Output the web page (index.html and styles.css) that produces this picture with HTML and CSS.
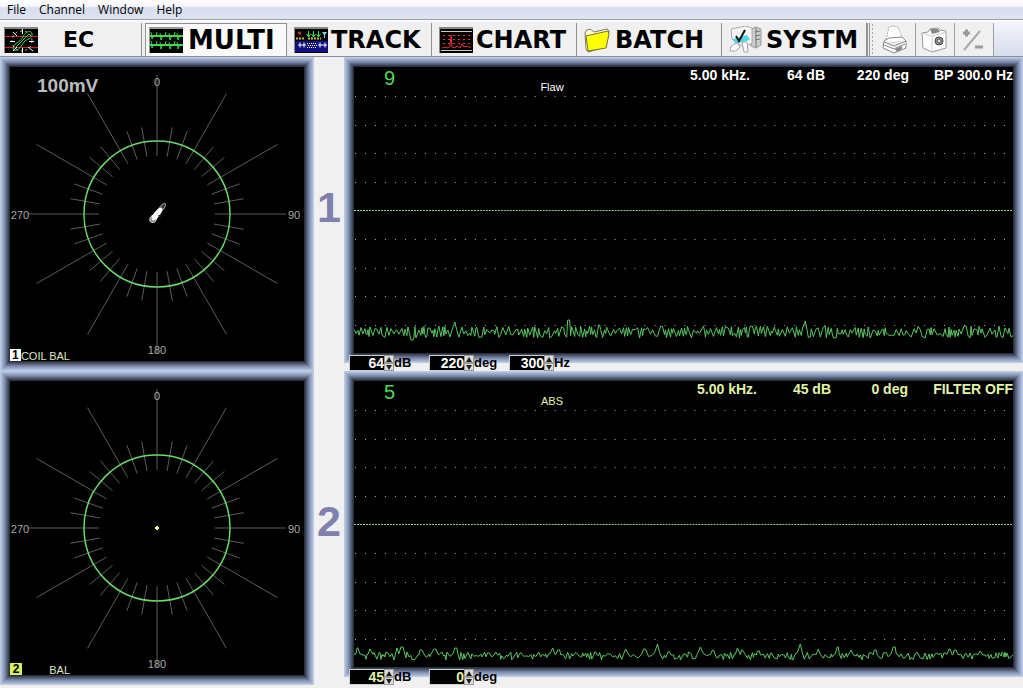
FILE: index.html
```html
<!DOCTYPE html>
<html lang="en">
<head>
    <meta charset="UTF-8">
    <meta name="viewport" content="width=device-width, initial-scale=1.0">
    <title>Eddy Current</title>
    <link rel="stylesheet" href="styles.css">
</head>
<body>
    <nav class="menu-bar">
        <button type="button">File</button>
        <button type="button">Channel</button>
        <button type="button">Window</button>
        <button type="button">Help</button>
    </nav>

    <div class="toolbar">
        <button type="button" class="mode mode-ec">
            <svg class="icon" viewBox="0 0 34 26">
                <rect width="34" height="26" fill="#888"/><rect x="1" y="2" width="33" height="24" fill="#000"/>
                <path d="M1 9.500H34M1 20.500H34" stroke="#d02020"/>
                <circle cx="18" cy="14" r="10" fill="none" stroke="#ddd" stroke-dasharray="2 3"/>
                <path d="M18.500 2v5M18.500 21v5M6 14.500h5M25 14.500h5M9 5l4 4M9 24l4-4M24 20l5 4" stroke="#fff"/>
                <path d="M10 23C6 18 17 15 19 10S27 2 28 7 22 12 20 15 14 25 10 23ZM12 20L25 7" fill="none" stroke="#40d850"/>
            </svg>
            <span>EC</span>
        </button>
        <button type="button" class="mode active">
            <svg class="icon" viewBox="0 0 34 26">
                <rect width="34" height="26" fill="#999"/><rect x="1" y="2" width="33" height="24" fill="#000"/>
                <path d="M1 9h33M1 18h33" stroke="#40d850" stroke-width="2"/>
                <path d="M2 5l1 7 2-4 2 2 1-5M11 6l1 7 2-5 2 2 1-5M20 6l1 7 2-5 2 2 1-5M28 6l1 7 2-5 2 2M2 14l1 7 2-4 2 2 1-5M11 15l1 7 2-5 2 2 1-5M20 15l1 7 2-5 2 2 1-5M28 15l1 7 2-5 2 2" fill="none" stroke="#40d850"/>
            </svg>
            <span>MULTI</span>
        </button>
        <button type="button" class="mode">
            <svg class="icon" viewBox="0 0 34 26">
                <rect width="34" height="26" fill="#888"/><rect x="1" y="2" width="33" height="24" fill="#000"/>
                <rect x="1" y="14" width="33" height="11" fill="#101080"/>
                <path d="M4 6h3M5.500 4.500v3" stroke="#d03030" stroke-width="2"/>
                <path d="M14.500 4v6M19.500 4v6M24.500 4v6M12.500 7l2 3 2-3M17.500 7l2 3 2-3M22.500 7l2 3 2-3" fill="none" stroke="#40d850"/>
                <path d="M28 5h5l-2 3v3h-1V8z" fill="#60e0e0"/>
                <path d="M2 11.500h8M14 11.500h13" stroke="#c8c030" stroke-width="2" stroke-dasharray="2 1"/>
                <path d="M4 18h8M6 15.500v5M10 15.500v5M24 18h9M26 15.500v5M31 15.500v5" stroke="#fff"/>
                <path d="M13 16.500h9M14 18.500h9M13 20.500h9" stroke="#fff" stroke-dasharray="1 1"/>
            </svg>
            <span>TRACK</span>
        </button>
        <button type="button" class="mode">
            <svg class="icon" viewBox="0 0 34 26">
                <rect width="34" height="26" fill="#888"/><rect x="1" y="2" width="33" height="24" fill="#000"/>
                <path d="M2 4.500H33M2 23.500H33" stroke="#ccc"/>
                <path d="M4 8.500H32M4 12.500H32M4 16.500H32" stroke="#d04040" stroke-dasharray="2 3"/>
                <path d="M3 21l3-1 3 1 2-2 1-11 1 12 3 1 2-2 3 2 2-4 2 3 3-1 4 2" fill="none" stroke="#f03030"/>
            </svg>
            <span>CHART</span>
        </button>
        <button type="button" class="mode">
            <svg class="icon icon-folder" viewBox="0 0 28 26">
                <path d="M2 22L1 6q1-4 5-4l4 3 13-3 2 2-3 16L4 25z" fill="#fffbd0" stroke="#777"/>
                <path d="M2 9l22-5 1 3-3 14-18 3z" fill="#ffff00" stroke="#777722"/>
            </svg>
            <span>BATCH</span>
        </button>
        <button type="button" class="mode">
            <svg class="icon icon-system" viewBox="0 0 34 28">
                <path d="M22 3l5-2 5 2v16l-5 3-5-2z" fill="#ccc" stroke="#999"/>
                <path d="M26 6l5-1M26 10l5-1M26 14l5-1M27 2v19" stroke="#777"/>
                <path d="M2 3l15-3 6 2v15l-7 4-9-4-4-4z" fill="#f4f4f4" stroke="#aaa"/>
                <path d="M4 13l14-4 3 5-15 4z" fill="#50d8e8"/>
                <path d="M2 20l6-3 3 4-4 4H1zM13 16h5l1 10h-4z" fill="#fff" stroke="#aaa"/>
                <path d="M7 10l3 5 6-11" fill="none" stroke="#111" stroke-width="2"/>
            </svg>
            <span>SYSTM</span>
        </button>
        <div class="tools">
            <button type="button" aria-label="Print">
                <svg viewBox="0 0 28 30">
                    <path d="M5 15L8 2l3-1 6 1 3 8 1 5-9 3z" fill="#fff" stroke="#aaa" stroke-dasharray="2 1"/>
                    <path d="M3 16l5-3 13-1 4 4v7l-12 5L2 23zM3 17l10 4 12-5M3 20l10 4 11-5" fill="#fff" stroke="#888"/>
                    <path d="M14 24l7-3v3l-5 3z" fill="#888"/>
                </svg>
            </button>
            <button type="button" aria-label="Capture">
                <svg viewBox="0 0 28 30">
                    <path d="M2 8l6-1 2-3 8-1 2 2 6 1v17l-14 4-9-4z" fill="#fff" stroke="#999"/>
                    <path d="M2 8l10 3 14-4M12 11v16" fill="none" stroke="#ccc"/>
                    <path d="M10 4h8l2 3-8 2z" fill="#888"/>
                    <circle cx="19" cy="16" r="4" fill="#999" stroke="#444"/>
                    <circle cx="19" cy="16" r="2" fill="#ddd" stroke="#555"/>
                </svg>
            </button>
            <button type="button" aria-label="Offset">
                <svg viewBox="0 0 28 30">
                    <path d="M4 8h7M7.500 4.500v7M16 22h8" stroke="#999" stroke-width="3"/>
                    <path d="M21 6L5 25" stroke="#aaa" stroke-width="2"/>
                </svg>
            </button>
        </div>
    </div>

    <main>
        <section class="channel">
            <div class="frame dial">
                <svg viewBox="0 0 294 294">
                    <g class="ticks"></g>
                    <circle class="ring" cx="147" cy="147" r="73"/>
                    <g transform="rotate(38 147 147)">
                        <ellipse cx="147" cy="139" rx="2" ry="5" fill="#333" stroke="#999"/>
                        <ellipse cx="147" cy="153" rx="3" ry="4" fill="#777" stroke="#ccc"/>
                        <ellipse cx="147" cy="147" rx="3" ry="8" fill="#fff"/>
                    </g>
                    <path d="M148 148h3v2h-2z" fill="#222"/>
                    <text x="147" y="19">0</text>
                    <text x="10" y="152">270</text>
                    <text x="284" y="152">90</text>
                    <text x="147" y="287">180</text>
                </svg>
                <span class="scale">100mV</span>
                <div class="balance"><b>1</b><span>COIL BAL</span></div>
            </div>
            <div class="number">1</div>
            <div class="strip">
                <div class="frame plot">
                    <svg viewBox="0 0 660 286" preserveAspectRatio="none" data-base="265" data-kind="flaw"></svg>
                    <span class="count">9</span>
                    <span class="name">Flaw</span>
                    <div class="readouts">
                        <span>5.00 kHz.</span><span>64 dB</span><span>220 deg</span><span>BP 300.0 Hz</span>
                    </div>
                </div>
                <form class="settings">
                    <div class="setting">
                        <input id="gain1" value="64">
                        <div class="spin"><button type="button" aria-label="Up"></button><button type="button" aria-label="Down"></button></div>
                        <label for="gain1">dB</label>
                    </div>
                    <div class="setting">
                        <input id="phase1" value="220">
                        <div class="spin"><button type="button" aria-label="Up"></button><button type="button" aria-label="Down"></button></div>
                        <label for="phase1">deg</label>
                    </div>
                    <div class="setting">
                        <input id="filter1" value="300">
                        <div class="spin"><button type="button" aria-label="Up"></button><button type="button" aria-label="Down"></button></div>
                        <label for="filter1">Hz</label>
                    </div>
                </form>
            </div>
        </section>

        <section class="channel second">
            <div class="frame dial">
                <svg viewBox="0 0 294 294">
                    <g class="ticks"></g>
                    <circle class="ring" cx="147" cy="147" r="73"/>
                    <path d="M145 147h4M147 145v4" stroke="#e8f890" stroke-width="2"/>
                    <text x="147" y="19">0</text>
                    <text x="10" y="152">270</text>
                    <text x="284" y="152">90</text>
                    <text x="147" y="287">180</text>
                </svg>
                <div class="balance"><b>2</b><span>BAL</span></div>
            </div>
            <div class="number">2</div>
            <div class="strip">
                <div class="frame plot">
                    <svg viewBox="0 0 660 286" preserveAspectRatio="none" data-base="276" data-kind="abs"></svg>
                    <span class="count">5</span>
                    <span class="name">ABS</span>
                    <div class="readouts">
                        <span>5.00 kHz.</span><span>45 dB</span><span>0 deg</span><span>FILTER OFF</span>
                    </div>
                </div>
                <form class="settings">
                    <div class="setting">
                        <input id="gain2" value="45">
                        <div class="spin"><button type="button" aria-label="Up"></button><button type="button" aria-label="Down"></button></div>
                        <label for="gain2">dB</label>
                    </div>
                    <div class="setting">
                        <input id="phase2" value="0">
                        <div class="spin"><button type="button" aria-label="Up"></button><button type="button" aria-label="Down"></button></div>
                        <label for="phase2">deg</label>
                    </div>
                </form>
            </div>
        </section>
    </main>
    <script src="app.js"></script>
</body>
</html>
```
FILE: styles.css
```css
* {
    margin: 0;
    padding: 0;
    box-sizing: border-box;
}

body {
    min-height: 100vh;
    background: #f0f0f0;
    font-family: "Liberation Sans", Arial, sans-serif;
}

button {
    border: none;
    background: none;
    color: #000;
}

svg {
    display: block;
}

/* Menu and toolbar */
.menu-bar {
    display: flex;
    gap: 13px;
    height: 20px;
    padding-left: 7px;
    background: linear-gradient(#fff 0, #f6f7fb 6px, #d9dfef 8px, #dde3f2 100%);
    border-bottom: 1px solid #a0a0a0;
}

.menu-bar button {
    font: 12px/19px "Open Sans", sans-serif;
}

.toolbar {
    display: flex;
    height: 37px;
    padding-top: 2px;
    border-top: 1px solid #fff;
    border-bottom: 1px solid #8890a0;
    background: linear-gradient(#f4f6fb, #d6ddee);
}

.mode {
    display: flex;
    align-items: center;
    gap: 3px;
    flex: none;
    width: 145px;
    padding-left: 7px;
    background: #f0f0f0;
    border-right: 1px solid #909090;
    font: bold 24px/30px "DejaVu Sans", Verdana, sans-serif;
}

.mode-ec {
    width: 142px;
    gap: 25px;
    padding-left: 4px;
    font-size: 22px;
}

.mode.active {
    width: 145px;
    background: #fafafa;
    border-left: 1px solid #909090;
    border-top: 1px solid #909090;
    box-shadow: -3px 0 0 #f0f0f0;
    margin-left: 3px;
    width: 142px;
    padding-left: 3px;
    gap: 5px;
    font-size: 26px;
}

.icon {
    width: 34px;
    height: 26px;
    flex: none;
}

.icon-folder {
    width: 28px;
}

.icon-system {
    height: 28px;
}

.tools {
    display: flex;
    background: #f0f0f0;
    border-left: 3px double #909090;
    padding-left: 7px;
    background-image: radial-gradient(circle, #aaa 1px, transparent 1px);
    background-size: 5px 4px;
    background-repeat: repeat-y;
}

.tools button {
    width: 39px;
    padding-left: 4px;
    border-right: 1px solid #a0a0a0;
}

.tools svg {
    width: 28px;
    height: 30px;
}

/* Channels */
.channel {
    display: grid;
    grid-template-columns: 314px 30px 1fr;
}

.frame {
    position: relative;
    margin: 10px;
    background: #000;
    box-shadow: 0 0 0 1px #2b303d, 0 0 0 2px #3a4253, 0 0 0 3px #4c566c,
        0 0 0 4px #5f6b86, 0 0 0 5px #717e9d, 0 0 0 6px #8290b1,
        0 0 0 7px #919fc0, 0 0 0 8px #9fadcc, 0 0 0 9px #aebcd8, 0 0 0 10px #bccbe4;
}

.number {
    display: grid;
    place-items: center;
    padding-bottom: 14px;
    color: #8080ae;
    font-size: 43px;
    font-weight: bold;
}

.strip {
    display: flex;
    flex-direction: column;
    min-width: 0;
}

/* Impedance dial */
.dial text {
    fill: #a8a8a8;
    font-size: 11px;
    text-anchor: middle;
}

.ticks {
    stroke: #5c5c5c;
}

.ring {
    fill: none;
    stroke: #6cd86c;
    stroke-width: 1.5;
}

.scale {
    position: absolute;
    top: 8px;
    left: 27px;
    color: #bcbcbc;
    font-size: 19px;
    font-weight: bold;
}

.balance {
    position: absolute;
    left: 0;
    bottom: 0;
    display: flex;
    justify-content: space-between;
    width: 60px;
    color: #dfe8c0;
    font-size: 11px;
    line-height: 10px;
    white-space: nowrap;
    align-items: flex-end;
}

.balance b {
    width: 12px;
    background: #fff;
    color: #000;
    font-size: 12px;
    line-height: 12px;
    text-align: center;
}

.second .balance b {
    background: #d4f060;
}

/* Strip chart */
.plot {
    flex: 1;
    color: #fff;
}

.plot svg {
    position: absolute;
    inset: 0;
    width: 100%;
    height: 100%;
}

.dots {
    stroke: #b0b0b0;
    stroke-dasharray: 1 9;
}

.zero {
    stroke: #8cd87c;
    stroke-dasharray: 2 1;
}

.wave {
    fill: none;
    stroke: #58c862;
    stroke-width: 1;
}

.count {
    position: absolute;
    top: 0;
    left: 30px;
    color: #50d858;
    font-size: 20px;
}

.name {
    position: absolute;
    top: 14px;
    left: 168px;
    width: 60px;
    text-align: center;
    font-size: 11px;
}

.readouts {
    position: relative;
    display: grid;
    grid-template-columns: 80px 75px 84px 104px;
    justify-content: end;
    text-align: right;
    font-size: 14px;
    font-weight: bold;
    line-height: 16px;
    white-space: nowrap;
}

.second .readouts {
    grid-template-columns: 80px 74px 77px 105px;
}

.second .plot,
.second input {
    color: #e0f4a8;
}

/* The fields lie over the lower edge of the frame */
.settings {
    position: relative;
    display: flex;
    height: 16px;
    margin-top: -8px;
    padding-left: 5px;
}

.setting {
    display: flex;
    width: 80px;
}

.setting input {
    width: 35px;
    height: 16px;
    border: 1px solid #d0d0d0;
    border-right: none;
    background: #000;
    color: #fff;
    font: bold 14px/14px "Liberation Sans", Arial, sans-serif;
    text-align: right;
}

.second .setting input {
    color: #e0f4a8;
}

.spin {
    display: flex;
    flex-direction: column;
    width: 10px;
}

.spin button {
    height: 8px;
    background: #ddd;
    border: 1px solid #999;
    display: grid;
    place-items: center;
}

.spin button::before {
    content: "";
    border: 3px solid transparent;
    border-top: none;
    border-bottom: 5px solid #222;
}

.spin button:last-child::before {
    border-bottom: none;
    border-top: 5px solid #222;
}

.setting label {
    font-size: 13px;
    font-weight: bold;
    line-height: 16px;
}
```
FILE: app.js
```javascript
const NS = "http://www.w3.org/2000/svg";

function add(parent, tag, attrs) {
    const el = document.createElementNS(NS, tag);
    for (const key in attrs) el.setAttribute(key, attrs[key]);
    parent.appendChild(el);
}

// Ticks every 10 degrees, long ones every 30
document.querySelectorAll(".ticks").forEach(function(g) {
    for (let a = 0; a < 360; a += 10) {
        const sin = Math.sin(a * Math.PI / 180);
        const cos = Math.cos(a * Math.PI / 180);
        let outer = a % 30 === 0 ? 139 : 88;
        if (a === 90 || a === 270) outer = 129;
        add(g, "line", {
            x1: 147 + 58 * sin, y1: 147 - 58 * cos,
            x2: 147 + outer * sin, y2: 147 - outer * cos
        });
    }
});

// x position and height of the larger spikes
const PEAKS = {
    flaw: [[101, 10], [215, 12], [452, 11], [58, -8], [245, 7], [398, 6], [612, 6]],
    abs: [[4, 9], [16, 8], [44, 9], [48, 10], [67, 7], [81, 8], [102, 9], [142, 5], [198, 9], [205, 7],
        [242, 5], [272, 8], [291, 8], [304, 13], [316, 6], [347, 10], [359, 7], [384, 9], [389, 7],
        [405, 6], [446, 13], [463, 8], [465, 8], [484, 10], [498, 7], [522, 7], [541, 10], [596, 8],
        [602, 7], [627, 6]]
};

document.querySelectorAll(".plot svg").forEach(function(svg) {
    [29, 58, 86, 115, 172, 201, 229, 258].forEach(function(y) {
        add(svg, "line", { class: "dots", x1: 1, x2: 660, y1: y + 0.5, y2: y + 0.5 });
    });
    add(svg, "line", { class: "zero", x1: 0, x2: 660, y1: 143.5, y2: 143.5 });

    const base = Number(svg.dataset.base);
    const kind = svg.dataset.kind;
    let seed = kind === "flaw" ? 1713 : 9157;

    function random() {
        seed = (seed * 16807) % 2147483647;
        return seed / 2147483647;
    }

    const points = [];
    let side = 1;
    let x = 0;
    while (x <= 660) {
        // Mostly alternates, now and then keeps its side
        if (random() > 0.2) side = -side;
        let h = kind === "flaw" ? side * (1 + random() * 5) : side * random() * 4 + 1;
        PEAKS[kind].forEach(function(p) {
            const d = Math.abs(p[0] - x);
            if (d <= 1) h = p[1];
            else if (kind === "abs" && d <= 3) h = p[1] / 3;
        });
        points.push(x + "," + (base - h).toFixed(1));
        x += random() > 0.6 ? 1 : random() > 0.3 ? 2 : 3;
    }
    add(svg, "polyline", { class: "wave", points: points.join(" ") });
});
```
